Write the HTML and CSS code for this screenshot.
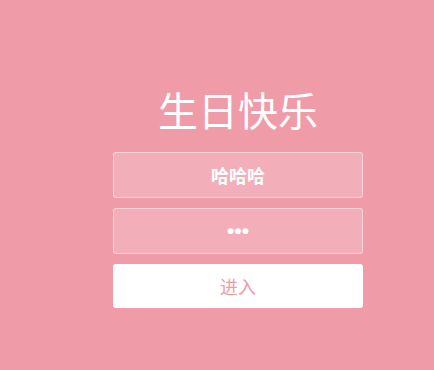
FILE: index.html
```html
<!DOCTYPE html>
<html lang="zh">
<head>
<meta charset="utf-8">
<title>生日快乐</title>
<link rel="stylesheet" href="styles.css">
</head>
<body>
<div class="wrap">
  <h1 class="title">生日快乐</h1>
  <form class="form">
    <input class="field name" type="text" value="哈哈哈">
    <input class="field pass" type="password" value="abc">
    <button class="enter" type="button">进入</button>
  </form>
</div>
</body>
</html>
```
FILE: styles.css
```css
html, body {
  margin: 0;
  padding: 0;
  background: #ef9ca8;
  height: 100%;
}
body {
  font-family: "Noto Sans CJK SC", "Noto Sans", sans-serif;
}
.wrap {
  width: 250px;
  margin-left: 113px;
  padding-top: 80px;
}
.title {
  margin: 0 0 14px;
  font-size: 40px;
  line-height: 58px;
  font-weight: 400;
  color: #fff;
  text-align: center;
}
.form {
  display: flex;
  flex-direction: column;
  gap: 10px;
}
.field {
  box-sizing: border-box;
  width: 250px;
  height: 46px;
  margin: 0;
  padding: 0 10px;
  border: 1px solid rgba(255, 255, 255, 0.45);
  border-radius: 3px;
  background: rgba(255, 255, 255, 0.2);
  color: #fff;
  font-family: inherit;
  font-size: 18px;
  font-weight: 700;
  text-align: center;
  outline: none;
}
.pass {
  font-family: "Liberation Sans", Arial, sans-serif;
  font-size: 21px;
  letter-spacing: 0;
}
.enter {
  box-sizing: border-box;
  width: 250px;
  height: 44px;
  margin: 0;
  border: none;
  border-radius: 3px;
  background: #fff;
  color: #ef9ca8;
  font-family: inherit;
  font-size: 18px;
  cursor: pointer;
}
```
